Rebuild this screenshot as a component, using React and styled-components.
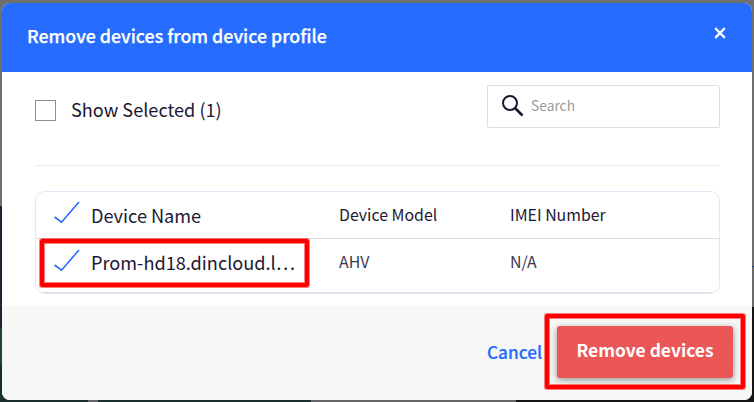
import React from "react"
import styled, { createGlobalStyle } from 'styled-components'


const GlobalStyle = createGlobalStyle`
  * {
    box-sizing: border-box;
  }
  body {
    margin: 0;
    font-family: "Noto Sans CJK SC", "Noto Sans", sans-serif;
    color: #1c1733;
  }
`
const Backdrop = styled.div`
  width: 754px;
  height: 402px;
  padding: 3px 2px 2px 2px;
  overflow: hidden;
  background-color: #6f6f6d;
  background-image:
    linear-gradient(90deg, #1a302e 88px, #666568 88px, #666568 98px, #1a302e 98px, #1a302e 311px, #666568 311px, #666568 516px, #171414 516px),
    linear-gradient(#6f6f6d 206px, #1b2534 206px, #1b2534 328px, #1b4543 328px, #1b4543 365px, #1a302e 365px),
    linear-gradient(#6f6f6d 266px, #123a8c 266px, #123a8c 267px, #6b6b6b 267px, #6b6b6b 307px, #171414 307px);
  background-repeat: no-repeat;
  background-position: 0 400px, 0 0, 740px 0;
  background-size: 754px 2px, 14px 402px, 14px 402px;
`
const Modal = styled.div`
  height: 397px;
  display: flex;
  flex-direction: column;
  border-radius: 8px;
  overflow: hidden;
  background-color: #fff;
`
const Header = styled.div`
  height: 69px;
  padding: 0 26px 0 25px;
  display: flex;
  justify-content: space-between;
  background-color: #256cff;
  color: #fff;
`
const Title = styled.h2`
  margin: 19px 0 0 0;
  font-size: 17.8px;
  font-weight: 500;
  line-height: 26px;
  white-space: nowrap;
  -webkit-text-stroke: .25px #fff;
`
const CloseButton = styled.button`
  width: 14px;
  height: 14px;
  margin: 23px 0 0 0;
  padding: 0;
  border: none;
  background: none;
  svg {
    display: block;
  }
`
const Body = styled.div`
  height: 234px;
  padding: 13px 32px 0 33px;
`
const Toolbar = styled.div`
  height: 81px;
  display: flex;
  justify-content: space-between;
  border-bottom: 1px solid #ececec;
`
const ShowSelected = styled.label`
  height: 50px;
  display: flex;
  align-items: center;
  font-size: 18.15px;
  line-height: 26px;
`
const Label = styled.span`
  margin-bottom: 2px;
`
const Checkbox = styled.span`
  width: 21px;
  height: 21px;
  margin-right: 15px;
  border: 1px solid #8e8e8e;
`
const SearchBox = styled.div`
  width: 233px;
  height: 43px;
  padding-left: 14px;
  display: flex;
  align-items: center;
  border: 1px solid #dedede;
  border-radius: 2px;
  color: #9b9b9b;
  font-size: 13.8px;
  line-height: 20px;
  svg {
    margin: -2px 7px 0 0;
  }
  span {
    margin-bottom: 4px;
  }
`
const Table = styled.div`
  height: 103px;
  margin-top: 25px;
  display: flex;
  flex-direction: column;
  border: 1px solid #e0e8f8;
  border-radius: 10px;
  overflow: hidden;
`
const Row = styled.div`
  height: ${({ $head }) => $head ? '47px' : '54px'};
  padding-left: 18px;
  display: flex;
  border-bottom: 1px solid #dcdde0;
  svg {
    margin-top: ${({ $head }) => $head ? '9px' : '10px'};
  }
`
const Cell = styled.div`
  width: ${({ $width }) => $width}px;
  margin-top: 11px;
  color: ${({ $muted }) => $muted ? '#3c384f' : '#1c1733'};
  font-size: ${({ $large }) => $large ? '18.15px' : '15.9px'};
  line-height: 24px;
  white-space: nowrap;
`
const Footer = styled.div`
  height: 94px;
  padding: 20px 19px 0 0;
  display: flex;
  justify-content: flex-end;
  background-color: #f7f7f7;
`
const CancelButton = styled.button`
  margin: 13px 15px 0 0;
  padding: 0;
  height: 26px;
  border: none;
  background: none;
  color: #256cff;
  font-family: inherit;
  font-size: 17.2px;
  font-weight: 500;
  line-height: 26px;
  -webkit-text-stroke: .2px #256cff;
`
const RemoveButton = styled.button`
  width: 176px;
  height: 52px;
  padding: 0 0 5px 0;
  border: none;
  border-radius: 3px;
  background-color: #eb5757;
  box-shadow: 0 2px 7px rgba(0, 0, 0, .4);
  color: #fff;
  font-family: inherit;
  font-size: 17.4px;
  font-weight: 700;
  white-space: nowrap;
`
const Highlight = styled.div`
  position: absolute;
  left: ${({ $x }) => $x}px;
  top: ${({ $y }) => $y}px;
  width: ${({ $w }) => $w}px;
  height: ${({ $h }) => $h}px;
  border: 4px solid #fe0000;
  border-radius: 2px;
  box-shadow: 0 0 0 1px rgba(254, 0, 0, .5), inset 0 0 0 1px rgba(254, 0, 0, .5);
`

const Tick = () => (
  <svg width="37" height="26" viewBox="0 0 37 26" fill="none">
    <path d="M0.5 16L7.5 21.2L25 1" stroke="#256cff" strokeWidth="1.6" />
  </svg>
)

const rows = [
  { name: 'Prom-hd18.dincloud.l…', model: 'AHV', imei: 'N/A' },
]


const App = () => {
  return (
  <>
    <GlobalStyle />
    <Backdrop>
      <Modal>
        <Header>
          <Title>Remove devices from device profile</Title>
          <CloseButton aria-label="Close">
            <svg width="14" height="14" viewBox="0 0 14 14">
              <path d="M4.1 3L12 11M12 3L4.1 11" stroke="#fff" strokeWidth="2.3" strokeLinecap="square" />
            </svg>
          </CloseButton>
        </Header>
        <Body>
          <Toolbar>
            <ShowSelected><Checkbox /><Label>Show Selected (1)</Label></ShowSelected>
            <SearchBox>
              <svg width="22" height="22" viewBox="0 0 22 22" fill="none" stroke="#1c1733">
                <circle cx="8" cy="8" r="7" strokeWidth="2" />
                <path d="M13 13L20.5 20.5" strokeWidth="2.6" />
              </svg>
              <span>Search</span>
            </SearchBox>
          </Toolbar>
          <Table>
            <Row $head>
              <Tick />
              <Cell $width={248} $large>Device Name</Cell>
              <Cell $width={171}>Device Model</Cell>
              <Cell $width={150}>IMEI Number</Cell>
            </Row>
            {rows.map((row) => (
              <Row key={row.name}>
                <Tick />
                <Cell $width={248} $large>{row.name}</Cell>
                <Cell $width={171} $muted>{row.model}</Cell>
                <Cell $width={150} $muted>{row.imei}</Cell>
              </Row>
            ))}
          </Table>
        </Body>
        <Footer>
          <CancelButton>Cancel</CancelButton>
          <RemoveButton>Remove devices</RemoveButton>
        </Footer>
      </Modal>
      <Highlight $x={40} $y={239} $w={269} $h={48} />
      <Highlight $x={545} $y={314} $w={200} $h={75} />
    </Backdrop>
  </>
)
}


export default App
